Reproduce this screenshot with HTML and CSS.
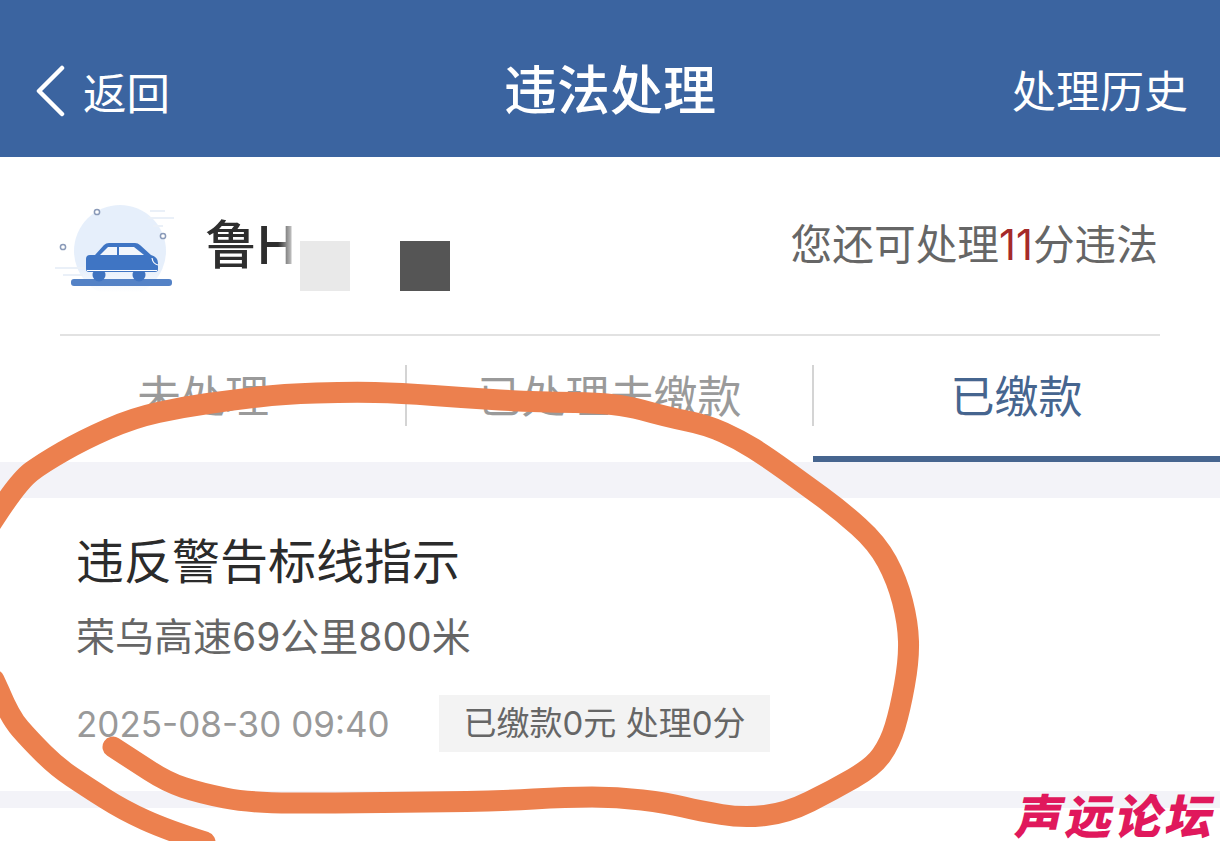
FILE: index.html
```html
<!DOCTYPE html>
<html lang="zh-CN">
<head>
  <meta charset="UTF-8" />
  <meta name="viewport" content="width=device-width, initial-scale=1.0" />
  <title>违法处理</title>
  <link rel="stylesheet" href="styles.css">
</head>
<body>
  <div class="page">
    <header class="topbar">
      <div class="back">
        <svg class="back-icon" width="32" height="52" viewBox="0 0 32 52"><path d="M28 3 L5 26 L28 49" fill="none" stroke="#fff" stroke-width="4.5" stroke-linecap="round" stroke-linejoin="round"/></svg>
        <span>返回</span>
      </div>
      <h1 class="title">违法处理</h1>
      <div class="history">处理历史</div>
    </header>

    <section class="plate-row">
      <div class="plate-left">
        <svg class="car" width="120" height="90" viewBox="0 0 120 90">
          <defs>
            <linearGradient id="halo" x1="0" y1="0" x2="0" y2="1">
              <stop offset="0.7" stop-color="#e6effb"/>
              <stop offset="0.95" stop-color="#fff"/>
            </linearGradient>
          </defs>
          <circle cx="65" cy="46" r="46" fill="url(#halo)"/>
          <g fill="none" stroke="#eaf0f8" stroke-width="2">
            <path d="M93 13 H119 M98 21 H108 M0 63 H30 M8 70 H28 M95 6 H110"/>
          </g>
          <g fill="#fff" stroke="#8a9ab8" stroke-width="1.5">
            <circle cx="42" cy="7" r="2.6"/>
            <circle cx="108" cy="31" r="2.6"/>
            <circle cx="8" cy="42" r="2.6"/>
          </g>
          <rect x="16" y="74" width="101" height="7" rx="3" fill="#5482c6"/>
          <circle cx="44" cy="70" r="6.5" fill="#3f73c0"/>
          <circle cx="84" cy="70" r="6.5" fill="#3f73c0"/>
          <path d="M31 54 Q31 50 35 50 H40 L49 40 Q51 38 54 38 H80 Q83 38 85 40 L96 50 Q103 52 103 58 V64 Q103 67 100 67 H34 Q31 67 31 64 Z" fill="#3f75c4"/>
          <path d="M45 50 L53 42 H62 V50 Z M64 42 H79 L89 50 H64 Z" fill="#f2f6fc"/>
          <path d="M32 65.5 H102" stroke="#fff" stroke-width="1"/>
          <path d="M97 53 Q98 59 103 60" fill="none" stroke="#fff" stroke-width="1.2"/>
        </svg>
        <span class="plate">鲁H</span>
      </div>
      <div class="quota">您还可处理<em>11</em>分违法</div>
      <i class="plate-fade"></i>
      <i class="mask mask-light"></i>
      <i class="mask mask-dark"></i>
    </section>

    <nav class="tabs">
      <div class="tab">未处理</div>
      <div class="tab">已处理未缴款</div>
      <div class="tab active">已缴款</div>
    </nav>

    <article class="card">
      <h2 class="card-title">违反警告标线指示</h2>
      <p class="card-place">荣乌高速69公里800米</p>
      <div class="card-meta">
        <span class="card-date">2025-08-30 09:40</span>
        <span class="card-tag">已缴款0元 处理0分</span>
      </div>
    </article>
    <div class="card-gap"></div>

    <svg class="scribble" width="1220" height="841" viewBox="0 0 1220 841">
      <path d="M-10 525 L0 510 Q20 480 31.5 471.5 Q43 463 63 451.5 Q83 440 108 429 Q133 418 158 412.5 Q183 407 208 403.5 Q233 400 258 397 Q283 394 316.5 393 Q350 392 375 392.5 Q400 393 433.5 395.5 Q467 398 500 400 Q533 402 575 402.5 Q617 403 642 410 Q667 417 687 421 Q707 425 723.5 432.5 Q740 440 753.5 448.5 Q767 457 785 470 Q803 483 821.5 496.5 Q840 510 858.5 526.5 Q877 543 887 561.5 Q897 580 902.5 601.5 Q908 623 908.5 641.5 Q909 660 904.5 685 Q900 710 895 726.5 Q890 743 881.5 755 Q873 767 853 778.5 Q833 790 810 801.5 Q787 813 765 815.5 Q743 818 721.5 814.5 Q700 811 683.5 807 Q667 803 642 800 Q617 797 592 797 Q567 797 533.5 799 Q500 801 466.5 801.5 Q433 802 383 802.5 Q333 803 291.5 803 Q250 803 225 798 Q200 793 183.5 787.5 Q167 782 150 771 Q133 760 113 747" fill="none" stroke="#ec804e" stroke-width="21" stroke-linecap="round" stroke-linejoin="round"/>
      <path d="M-6 680 L0 693 Q10 717 20 728.5 Q30 740 43.5 753.5 Q57 767 72 777 Q87 787 105 798.5 Q123 810 145 820 Q167 830 205 842" fill="none" stroke="#ec804e" stroke-width="21" stroke-linecap="round" stroke-linejoin="round"/>
    </svg>

    <div class="watermark">声远论坛</div>
  </div>
</body>
</html>
```

FILE: styles.css
```css
* {
  box-sizing: border-box;
}

html, body {
  margin: 0;
  padding: 0;
  background: #fff;
}

body {
  font-family: Inter, "Noto Sans CJK SC", "Noto Sans", sans-serif;
}

.page {
  position: relative;
  width: 1220px;
  height: 841px;
  overflow: hidden;
  background: #fff;
}

/* top bar */
.topbar {
  display: grid;
  grid-template-columns: 1fr auto 1fr;
  align-items: center;
  height: 157px;
  padding: 21px 32px 0 32px;
  background: #3b64a0;
  color: #fff;
}

.back {
  display: flex;
  align-items: center;
  gap: 17px;
  margin: 4px 0 0 2px;
  font-size: 43.5px;
}

.title {
  margin: 6px 0 0;
  font-size: 53px;
  font-weight: 500;
  line-height: 1.2;
}

.history {
  justify-self: end;
  font-size: 44px;
}

/* plate */
.plate-row {
  position: relative;
  display: flex;
  align-items: center;
  justify-content: space-between;
  height: 179px;
  margin: 0 60px;
  padding: 0 2px 0 0;
  border-bottom: 2px solid #e2e2e2;
}

.plate-left {
  display: flex;
  align-items: center;
  gap: 30px;
  margin-left: -5px;
}

.car {
  margin-top: 8px;
}

.plate {
  font-size: 52px;
  font-weight: 500;
  color: #2e2e2e;
  margin-top: -8px;
}

.quota {
  font-size: 41.7px;
  color: #666;
  margin-top: -7px;
}

.quota em {
  font-style: normal;
  color: #a52a2a;
}

.plate-fade {
  position: absolute;
  left: 218px;
  top: 60px;
  width: 24px;
  height: 70px;
  background: linear-gradient(to right, rgba(255, 255, 255, 0), #fff 80%);
}

.mask {
  position: absolute;
  top: 84px;
  width: 50px;
  height: 50px;
}

.mask-light {
  left: 240px;
  background: #e9e9e9;
}

.mask-dark {
  left: 340px;
  background: #555;
}

/* tabs */
.tabs {
  display: grid;
  grid-template-columns: 406px 407px 407px;
  height: 126px;
}

.tabs + .card {
  border-top: 36px solid #f3f3f8;
}

.tab {
  position: relative;
  padding-top: 31px;
  font-size: 44px;
  line-height: 60px;
  text-align: center;
  color: #9a9a9a;
}

.tab + .tab::before {
  content: "";
  position: absolute;
  left: -1px;
  top: 29px;
  width: 2px;
  height: 61px;
  background: #d4d4d4;
}

.tab.active {
  color: #46658f;
  border-bottom: 6px solid #46658f;
}

/* record */
.card {
  height: 329px;
  padding: 29px 76px 0;
}

.card-title {
  margin: 0;
  font-size: 48px;
  font-weight: 400;
  line-height: 70px;
  color: #2b2b2b;
}

.card-place {
  margin: 13px 0 0;
  font-size: 39px;
  line-height: 54px;
  color: #666;
}

.card-meta {
  display: flex;
  align-items: center;
  margin-top: 31px;
}

.card-date {
  width: 363px;
  font-size: 35px;
  color: #999;
}

.card-tag {
  display: block;
  width: 331px;
  height: 57px;
  font-size: 33px;
  line-height: 57px;
  text-align: center;
  background: #f3f3f3;
  color: #666;
}

.card-gap {
  height: 17px;
  background: #f3f3f8;
}

/* hand drawn circle on top of the shot */
.scribble {
  position: absolute;
  left: 0;
  top: 0;
  pointer-events: none;
}

.watermark {
  position: absolute;
  left: 1017px;
  top: 794px;
  font-size: 47px;
  font-weight: 900;
  line-height: 46px;
  letter-spacing: 3px;
  white-space: nowrap;
  color: #e0185c;
  transform: skewX(-12deg);
}
```
